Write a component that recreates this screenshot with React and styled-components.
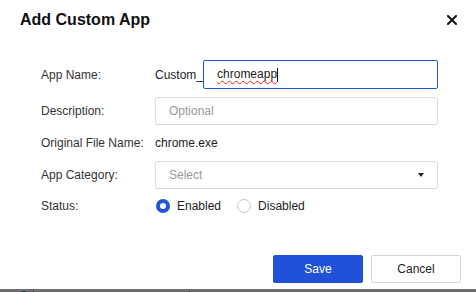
import React from 'react';
import styled, { createGlobalStyle } from 'styled-components';

const GlobalStyle = createGlobalStyle`
  html, body {
    margin: 0;
    padding: 0;
    background: #6e6e6e;
    font-family: "Liberation Sans", Arial, sans-serif;
    overflow: hidden;
  }
`;

const Page = styled.div`
  width: 476px;
  height: 292px;
  overflow: hidden;
`;

const Dialog = styled.div`
  width: 476px;
  height: 289px;
  background: #fff;
  display: flex;
  flex-direction: column;
  box-sizing: border-box;
`;

const Header = styled.div`
  display: flex;
  align-items: center;
  justify-content: space-between;
  padding: 11px 19px 0 20px;
`;

const Title = styled.h2`
  margin: 0;
  font-size: 16px;
  line-height: 18px;
  font-weight: bold;
  color: #111;
`;

const CloseButton = styled.button`
  border: 0;
  background: none;
  padding: 0;
  width: 10px;
  height: 10px;
  display: flex;
  cursor: pointer;
`;

const Form = styled.div`
  margin-top: 31px;
  padding: 0 38px 0 41px;
  display: grid;
  grid-template-columns: 114px 1fr;
  row-gap: 8px;
`;

const Label = styled.div`
  height: ${p => p.h}px;
  display: flex;
  align-items: center;
  font-size: 12px;
  color: #333;
`;

const Value = styled.div`
  height: ${p => p.h}px;
  display: flex;
  align-items: center;
  font-size: 12px;
  color: #222;
`;

const Prefix = styled.span`
  color: #222;
`;

const Field = styled.div`
  flex: 1;
  height: 100%;
  box-sizing: border-box;
  border: 1px solid ${p => (p.focused ? '#2454d6' : '#dcdcdc')};
  border-radius: 2px;
  display: flex;
  align-items: center;
  justify-content: space-between;
  padding: 0 12px 0 13px;
  color: ${p => (p.placeholder ? '#999' : '#222')};
`;

const Typed = styled.span`
  text-decoration: underline wavy #e0281e;
  text-decoration-thickness: 1px;
  text-underline-offset: 2px;
`;

const Caret = styled.span`
  display: inline-block;
  width: 1px;
  height: 14px;
  background: #111;
  vertical-align: middle;
`;

const Arrow = styled.span`
  width: 0;
  height: 0;
  border-left: 3.5px solid transparent;
  border-right: 3.5px solid transparent;
  border-top: 4px solid #222;
  margin-right: 1px;
`;

const RadioGroup = styled.div`
  display: flex;
  align-items: center;
  gap: 16px;
`;

const RadioOption = styled.label`
  display: flex;
  align-items: center;
  gap: 7px;
  margin-left: ${p => (p.first ? '1px' : '0')};
  color: #222;
`;

const RadioDot = styled.span`
  width: 14px;
  height: 14px;
  box-sizing: border-box;
  border-radius: 50%;
  border: ${p => (p.checked ? '4px solid #2454d6' : '1px solid #c8c8c8')};
  background: #fff;
`;

const Footer = styled.div`
  margin-top: auto;
  display: flex;
  justify-content: flex-end;
  gap: 8px;
  padding: 0 15px 6px;
`;

const Button = styled.button`
  width: 90px;
  height: 28px;
  box-sizing: border-box;
  border-radius: 2px;
  font-family: inherit;
  font-size: 12px;
  border: 1px solid ${p => (p.primary ? '#2151d9' : '#d6d6d6')};
  background: ${p => (p.primary ? '#2151d9' : '#fff')};
  color: ${p => (p.primary ? '#fff' : '#222')};
`;

const BehindRow = styled.div`
  display: flex;
  height: 3px;
  overflow: hidden;
  font-size: 12px;
  line-height: 12px;
  color: #1e2c5c;
  padding-top: 1px;
`;

const BehindCell = styled.span`
  width: ${p => p.w}px;
  padding-left: ${p => p.pl || 0}px;
`;

const rows = [
  { label: 'App Name:', h: 29 },
  { label: 'Description:', h: 28 },
  { label: 'Original File Name:', h: 20 },
  { label: 'App Category:', h: 28 },
  { label: 'Status:', h: 18 },
];

export default function App() {
  return (
    <Page>
      <GlobalStyle />
      <Dialog>
        <Header>
          <Title>Add Custom App</Title>
          <CloseButton aria-label="Close">
            <svg width="10" height="10" viewBox="0 0 10 10">
              <path d="M1 1L9 9M9 1L1 9" stroke="#111" strokeWidth="2" strokeLinecap="square" />
            </svg>
          </CloseButton>
        </Header>
        <Form>
          <Label h={rows[0].h}>{rows[0].label}</Label>
          <Value h={rows[0].h}>
            <Prefix>Custom_</Prefix>
            <Field focused>
              <span>
                <Typed>chromeapp</Typed>
                <Caret />
              </span>
            </Field>
          </Value>

          <Label h={rows[1].h}>{rows[1].label}</Label>
          <Value h={rows[1].h}>
            <Field placeholder="1">Optional</Field>
          </Value>

          <Label h={rows[2].h}>{rows[2].label}</Label>
          <Value h={rows[2].h}>chrome.exe</Value>

          <Label h={rows[3].h}>{rows[3].label}</Label>
          <Value h={rows[3].h}>
            <Field placeholder="1">
              Select
              <Arrow />
            </Field>
          </Value>

          <Label h={rows[4].h}>{rows[4].label}</Label>
          <Value h={rows[4].h}>
            <RadioGroup>
              <RadioOption first>
                <RadioDot checked />
                Enabled
              </RadioOption>
              <RadioOption>
                <RadioDot />
                Disabled
              </RadioOption>
            </RadioGroup>
          </Value>
        </Form>
        <Footer>
          <Button primary>Save</Button>
          <Button>Cancel</Button>
        </Footer>
      </Dialog>
      <BehindRow>
        <BehindCell w={163} pl={19}>Others</BehindCell>
        <BehindCell w={100}>chrome.exe</BehindCell>
      </BehindRow>
    </Page>
  );
}
